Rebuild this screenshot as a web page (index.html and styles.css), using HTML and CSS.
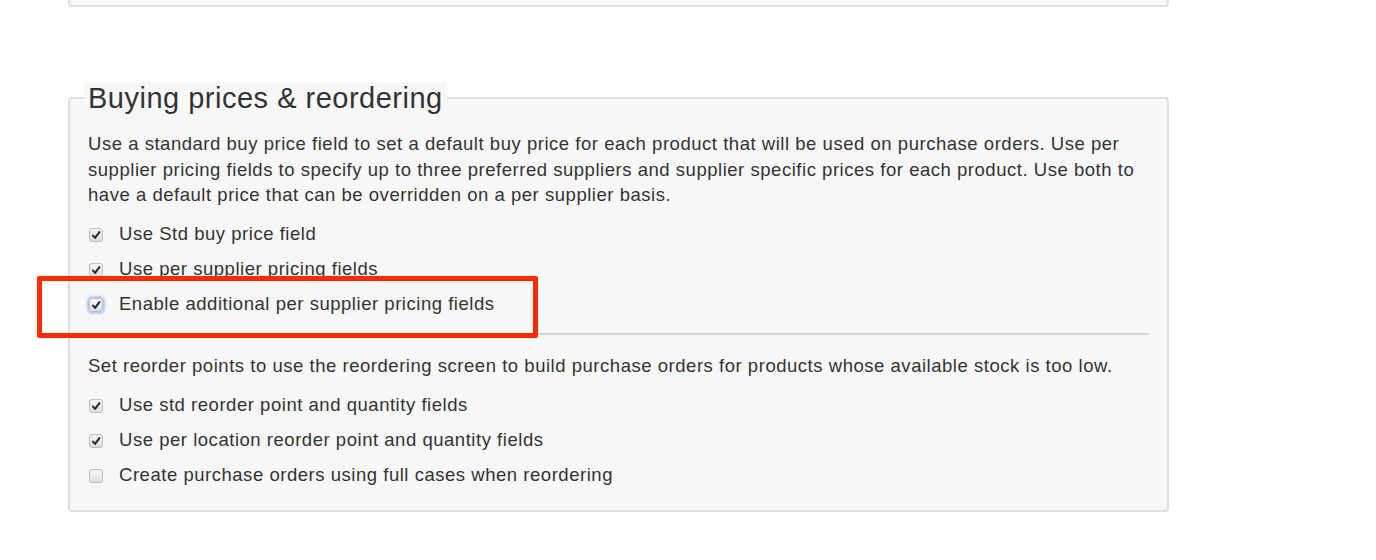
FILE: index.html
```html
<!DOCTYPE html>
<html>
<head>
<meta charset="utf-8">
<link rel="stylesheet" href="styles.css">
</head>
<body>
<div class="wrap">
  <div class="top-panel"></div>
  <fieldset class="panel">
    <legend>Buying prices &amp; reordering</legend>
    <p class="desc">Use a standard buy price field to set a default buy price for each product that will be used on purchase orders. Use per supplier pricing fields to specify up to three preferred suppliers and supplier specific prices for each product. Use both to have a default price that can be overridden on a per supplier basis.</p>
    <div class="opts">
      <label class="opt"><span class="box on"><svg viewBox="0 0 10 10"><path d="M2 5.6 L4.1 7.9 L8.4 2.2" /></svg></span>Use Std buy price field</label>
      <label class="opt"><span class="box on"><svg viewBox="0 0 10 10"><path d="M2 5.6 L4.1 7.9 L8.4 2.2" /></svg></span>Use per supplier pricing fields</label>
      <label class="opt"><span class="box on focus"><svg viewBox="0 0 10 10"><path d="M2 5.6 L4.1 7.9 L8.4 2.2" /></svg></span>Enable additional per supplier pricing fields</label>
    </div>
    <hr class="sep">
    <p class="desc2">Set reorder points to use the reordering screen to build purchase orders for products whose available stock is too low.</p>
    <div class="opts">
      <label class="opt"><span class="box on"><svg viewBox="0 0 10 10"><path d="M2 5.6 L4.1 7.9 L8.4 2.2" /></svg></span>Use std reorder point and quantity fields</label>
      <label class="opt"><span class="box on"><svg viewBox="0 0 10 10"><path d="M2 5.6 L4.1 7.9 L8.4 2.2" /></svg></span>Use per location reorder point and quantity fields</label>
      <label class="opt"><span class="box"></span>Create purchase orders using full cases when reordering</label>
    </div>
  </fieldset>
  <div class="highlight"></div>
</div>
</body>
</html>
```
FILE: styles.css
```css
html, body {
  margin: 0;
  padding: 0;
  background: #fff;
}
body {
  font-family: "Liberation Sans", Arial, sans-serif;
  color: #333;
  font-size: 18.5px;
  letter-spacing: 0.53px;
}
.wrap {
  position: relative;
  margin-left: 68px;
  width: 1101px;
}
.top-panel {
  margin-top: -30px;
  height: 33px;
  background: #f7f7f7;
  border: 2px solid #dedede;
  border-radius: 4px;
  box-sizing: content-box;
}
.panel {
  margin: 75px 0 0 0;
  padding: 0 18px 18px 18px;
  border: 2px solid #dedede;
  border-radius: 4px;
  background: #f7f7f7;
  min-width: 0;
}
.panel legend {
  font-size: 29px;
  line-height: 32px;
  letter-spacing: 0.5px;
  padding: 0 4px;
  margin-left: -4px;
  background: #f7f7f7;
  border-radius: 4px;
  color: #333;
}
.desc, .desc2 {
  margin: 0;
  line-height: 25.5px;
}
.desc {
  margin-top: 17px;
}
.opts {
  display: flex;
  flex-direction: column;
}
.desc + .opts {
  margin-top: 9px;
}
.desc2 + .opts {
  margin-top: 9px;
}
.opt {
  display: flex;
  align-items: center;
  height: 35px;
  line-height: 20px;
}
.box {
  width: 12px;
  height: 12px;
  margin: 2px 16px 0 1px;
  border: 1px solid #bcbcbc;
  border-radius: 3px;
  background: linear-gradient(#f5f5f5, #dedede);
  display: flex;
  align-items: center;
  justify-content: center;
  flex: none;
}
.box svg {
  width: 10px;
  height: 10px;
}
.box svg path {
  fill: none;
  stroke: #2b2b2b;
  stroke-width: 2.1;
  stroke-linecap: round;
  stroke-linejoin: round;
}
.box.focus {
  box-shadow: 0 0 2px 2px rgba(120, 170, 235, 0.55);
}
.sep {
  border: 0;
  border-top: 2px solid #d6d6d6;
  margin: 11px 0 0 0;
}
.desc2 {
  margin-top: 18px;
}
.highlight {
  position: absolute;
  left: -31px;
  top: 306px;
  width: 491px;
  height: 52px;
  border: 5px solid #ff2a00;
  border-radius: 2px;
}
```
